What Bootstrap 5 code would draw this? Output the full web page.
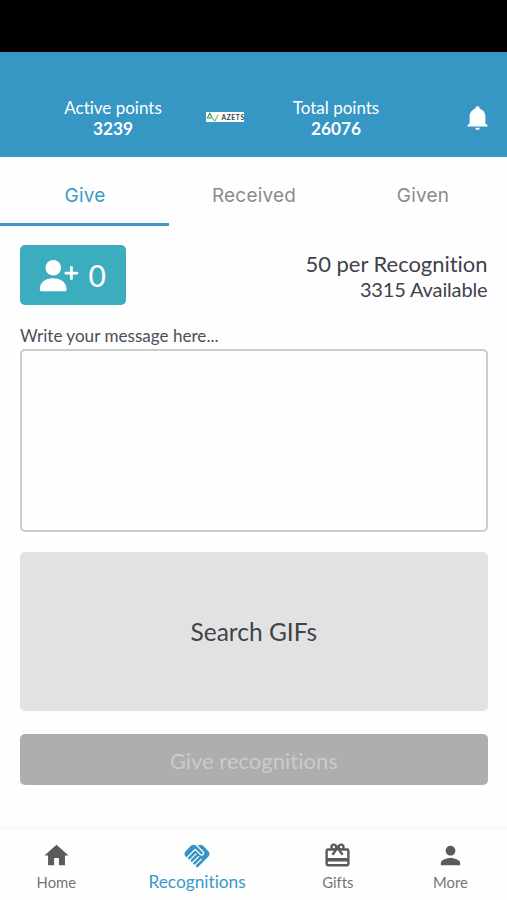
<!DOCTYPE html>
<html lang="en">
<head>
<meta charset="utf-8">
<meta name="viewport" content="width=device-width, initial-scale=1">
<title>Recognitions</title>
<link href="https://cdn.jsdelivr.net/npm/bootstrap@5.3.0/dist/css/bootstrap.min.css" rel="stylesheet">
<style>
  body { font-family: Lato, sans-serif; color: #3f424c; background: #fefefe; font-variant-ligatures: none; }
  button { font-variant-ligatures: none; }
  svg { display: block; flex: none; }
  .app { height: 900px; overflow: hidden; }
  .status-strip { height: 52px; background: #000; }
  .topbar { height: 105px; background: #3696c4; color: #fff; padding-top: 45px; }
  .points { font-size: 17px; line-height: 21px; }
  .points .fw-bold { font-size: 17.3px; }
  .points-active { width: 226px; }
  .points-total { width: 184px; }
  .brand { width: 38px; height: 10px; margin: 15px 0 0 -20px; }
  .bell { margin: 7px 0 0 36px; }
  .tabs { height: 69px; font-family: Inter, sans-serif; font-size: 19px; letter-spacing: .2px; }
  .tabs .nav-link { color: #8b8b8b; padding: 0 0 0 1px; height: 69px; line-height: 78px; border-bottom: 3px solid transparent; }
  .tabs .nav-link.active { color: #3c9acb; border-color: #3c98c5; }
  .content { padding: 19px 19.5px 0 20px; }
  .btn-people { width: 106px; height: 60px; background: #3badbe; color: #fff; border: 0; border-radius: 5px; font-size: 30px; padding: 1px 20px 0 19px; }
  .btn-people:hover { background: #3badbe; color: #fff; }
  .per { font-size: 22px; line-height: 26px; padding-top: 6px; letter-spacing: -.03px; }
  .available { font-size: 20px; line-height: 25px; letter-spacing: -.14px; }
  .msg-label { font-size: 17.1px; line-height: 22px; margin: 20px 0 2px; color: #4b4e57; }
  .msg-box { height: 183px; border: 2px solid #cbcdcd; border-radius: 5px; resize: none; background: #fefefe; }
  .gif-box { height: 159px; margin-top: 20px; padding-top: 3px; background: #e2e2e4; color: #414347; border: 0; border-radius: 5px; font-size: 24.5px; }
  .btn-give { height: 51px; margin-top: 23px; border: 0; border-radius: 5px; font-size: 22px; padding: 2px 0 0; }
  .btn-give:disabled { background: #aeaeae; color: #cbcbcb; opacity: 1; }
  .bottombar { height: 73px; color: #757575; font-size: 14.8px; line-height: 20px; background: #fefefe; border-top: 3px solid #fafafa; }
  .bottombar svg { color: #5b5b5b; }
  .tab-item { width: 112.6px; padding-top: 11px; }
  .tab-item.current { width: 169px; color: #3b98c6; font-size: 17.3px; }
  .tab-item.current svg { color: #3594c3; }
  .tab-item span { margin-top: 2px; }
  .tab-item.current span { margin-top: 1px; }
</style>
</head>
<body>
<div class="app d-flex flex-column">
  <div class="status-strip flex-shrink-0"></div>
  <header class="topbar d-flex align-items-start flex-shrink-0">
    <div class="points points-active text-center"><div>Active points</div><div class="fw-bold">3239</div></div>
    <svg class="brand" viewBox="0 0 38 10" role="img" aria-label="Azets">
      <rect width="38" height="10" fill="#fff"/>
      <path d="M1 6.5 3.8 1.2 6 6M2 6h3.5" fill="none" stroke="#2f8f66" stroke-width="1.1"/>
      <path d="M6.2 6 8.8 9l3.500-6.500" fill="none" stroke="#4bc46a" stroke-width="1.1"/>
      <text x="15.5" y="7.6" font-family="Lato, sans-serif" font-weight="700" font-size="6.6" textLength="22.5" fill="#343a40">AZETS</text>
    </svg>
    <div class="points points-total text-center"><div>Total points</div><div class="fw-bold">26076</div></div>
    <svg class="bell" width="27" height="27" viewBox="0 0 24 24" fill="#fff"><path d="M21 19v1H3v-1l2-2v-6c0-3.1 2.03-5.83 5-6.71V4a2 2 0 0 1 4 0v.29c2.97.88 5 3.61 5 6.71v6l2 2m-7 2a2 2 0 0 1-4 0"/></svg>
  </header>
  <nav class="tabs nav nav-fill flex-nowrap flex-shrink-0">
    <a class="nav-link active col-4" href="#">Give</a>
    <a class="nav-link col-4" href="#">Received</a>
    <a class="nav-link col-4" href="#">Given</a>
  </nav>
  <main class="content flex-grow-1">
    <div class="d-flex justify-content-between">
      <button class="btn btn-people d-flex align-items-center justify-content-between" type="button">
        <svg width="40" height="32" viewBox="0 0 40 32" fill="#fff"><circle cx="14.300" cy="7.800" r="7.800"/><path d="M.8 29.800C.8 22.500 6 18.300 14 18.300s13.600 4.200 13.600 11.500q0 1.400-1.400 1.400H2.200Q.8 31.200.8 29.800z"/><path d="M32.400 7.500v11.200M26.800 13.100H38" stroke="#fff" stroke-width="2.800" stroke-linecap="round"/></svg>
        <span>0</span>
      </button>
      <div class="text-end">
        <div class="per">50 per Recognition</div>
        <div class="available">3315 Available</div>
      </div>
    </div>
    <label class="msg-label d-block" for="message">Write your message here...</label>
    <textarea class="msg-box d-block w-100" id="message"></textarea>
    <button class="gif-box d-flex w-100 align-items-center justify-content-center" type="button">Search GIFs</button>
    <button class="btn btn-give w-100 d-block" type="button" disabled>Give recognitions</button>
  </main>
  <footer class="bottombar d-flex flex-shrink-0">
    <div class="tab-item d-flex flex-column align-items-center">
      <svg width="29" height="29" viewBox="0 0 24 24" fill="currentColor"><path d="M10 20v-6h4v6h5v-8h3L12 3 2 12h3v8z"/></svg>
      <span>Home</span>
    </div>
    <div class="tab-item current d-flex flex-column align-items-center">
      <svg width="30" height="30" viewBox="0 0 24 24" fill="currentColor"><path d="M16.480 10.410c-.39.39-1.040.39-1.430 0l-4.470-4.460-7.050 7.040-.66-.63c-1.170-1.170-1.170-3.070 0-4.240l4.240-4.240c1.170-1.170 3.070-1.170 4.240 0L16.480 9c.39.39.39 1.020 0 1.410zm.7-2.120c.78.78.78 2.050 0 2.830-1.270 1.270-2.610.22-2.830 0l-3.760-3.760-5.570 5.570c-.39.39-.39 1.020 0 1.410.39.39 1.020.39 1.420 0l4.620-4.620.71.71-4.620 4.620c-.39.39-.39 1.020 0 1.410.39.39 1.020.39 1.420 0l4.620-4.620.71.71-4.620 4.620c-.39.39-.39 1.020 0 1.410.39.39 1.020.39 1.410 0l4.620-4.620.71.71-4.620 4.620c-.39.39-.39 1.020 0 1.410.39.39 1.020.39 1.410 0l8.320-8.340c1.170-1.170 1.170-3.070 0-4.240l-4.240-4.240c-1.150-1.150-3.010-1.170-4.180-.06l4.470 4.470z"/></svg>
      <span>Recognitions</span>
    </div>
    <div class="tab-item d-flex flex-column align-items-center">
      <svg width="29" height="29" viewBox="0 0 24 24" fill="currentColor"><path d="M20 14H4V8h5.080L7 10.830 8.620 12 11 8.760l1-1.360 1 1.360L15.380 12 17 10.830 14.920 8H20m0 11H4v-2h16M9 4a1 1 0 0 1 0 2 1 1 0 0 1 0-2m6 0a1 1 0 0 1 0 2 1 1 0 0 1 0-2m5 2h-2.180c.11-.31.18-.65.18-1a3 3 0 0 0-3-3c-1.050 0-1.960.54-2.500 1.350l-.5.67-.5-.68C10.960 2.540 10.050 2 9 2a3 3 0 0 0-3 3c0 .35.07.69.18 1H4c-1.110 0-2 .89-2 2v11a2 2 0 0 0 2 2h16a2 2 0 0 0 2-2V8a2 2 0 0 0-2-2"/></svg>
      <span>Gifts</span>
    </div>
    <div class="tab-item d-flex flex-column align-items-center">
      <svg width="29" height="29" viewBox="0 0 24 24" fill="currentColor"><path d="M12 12c2.210 0 4-1.790 4-4s-1.790-4-4-4-4 1.790-4 4 1.790 4 4 4zm0 2c-2.670 0-8 1.340-8 4v2h16v-2c0-2.660-5.330-4-8-4z"/></svg>
      <span>More</span>
    </div>
  </footer>
</div>
<script src="https://cdn.jsdelivr.net/npm/bootstrap@5.3.0/dist/js/bootstrap.bundle.min.js"></script>
</body>
</html>
